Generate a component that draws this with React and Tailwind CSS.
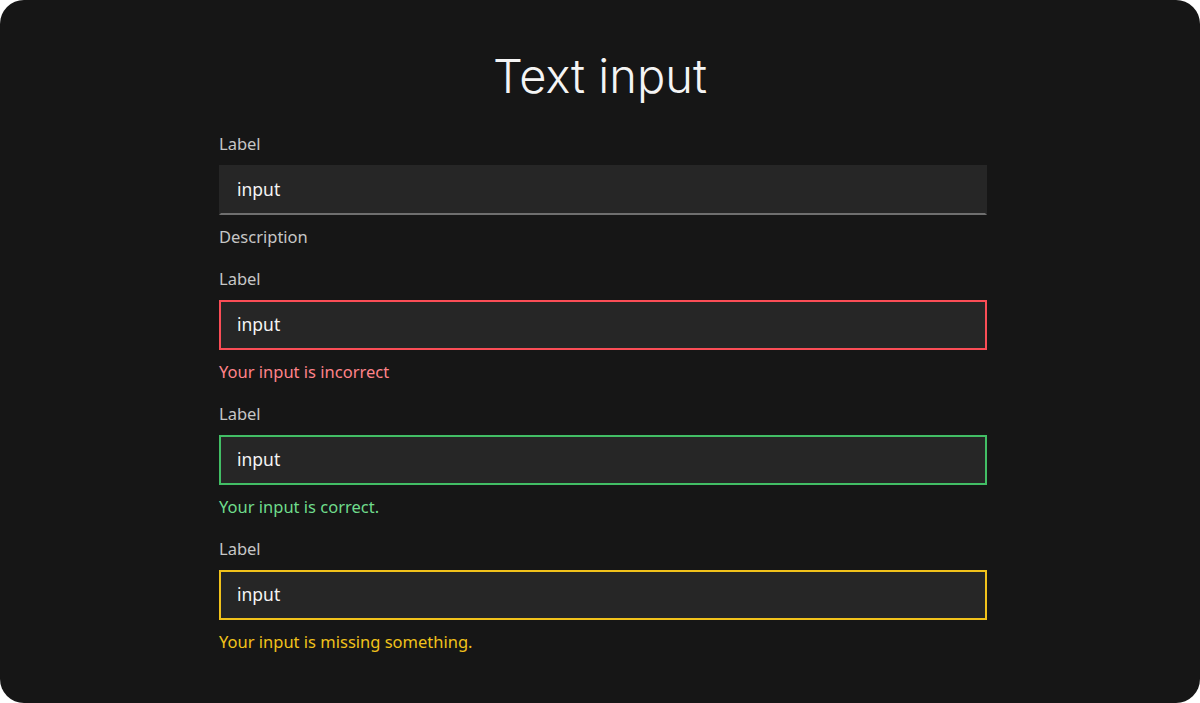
export default function App() {
  const Field = ({ border, helper, helperColor }) => (
    <div className="flex flex-col">
      <div className="h-[20px] text-[16.5px] leading-[20px] text-[#c6c6c6]">Label</div>
      <div className={`mt-[11px] flex h-[50px] items-center bg-[#262626] pb-[2px] pl-[16px] text-[17.5px] text-[#f4f4f4] ${border}`}>
        input
      </div>
      <div className={`mt-[12px] h-[20px] text-[16.5px] leading-[20px] ${helperColor}`}>{helper}</div>
    </div>
  );
  return (
    <div className="bg-white" style={{ fontFamily: "'Noto Sans', Inter, sans-serif" }}>
      <div className="flex h-[703px] w-[1200px] flex-col rounded-[24px] bg-[#161616]">
        <h1
          className="mt-[48px] h-[56px] text-center text-[47px] font-light leading-[56px] text-[#f4f4f4]"
          style={{ fontFamily: "Inter, sans-serif" }}
        >
          Text input
        </h1>
        <div className="ml-[219px] mt-[30px] flex w-[768px] flex-col gap-[22px]">
          <Field
            border="border-2 border-transparent border-b-[#6f6f6f]"
            helper="Description"
            helperColor="text-[#c6c6c6]"
          />
          <Field border="border-2 border-[#fa4d56]" helper="Your input is incorrect" helperColor="text-[#ff8389]" />
          <Field border="border-2 border-[#42be65]" helper="Your input is correct." helperColor="text-[#6fdc8c]" />
          <Field border="border-2 border-[#f1c21b]" helper="Your input is missing something." helperColor="text-[#f1c21b]" />
        </div>
      </div>
    </div>
  );
}
